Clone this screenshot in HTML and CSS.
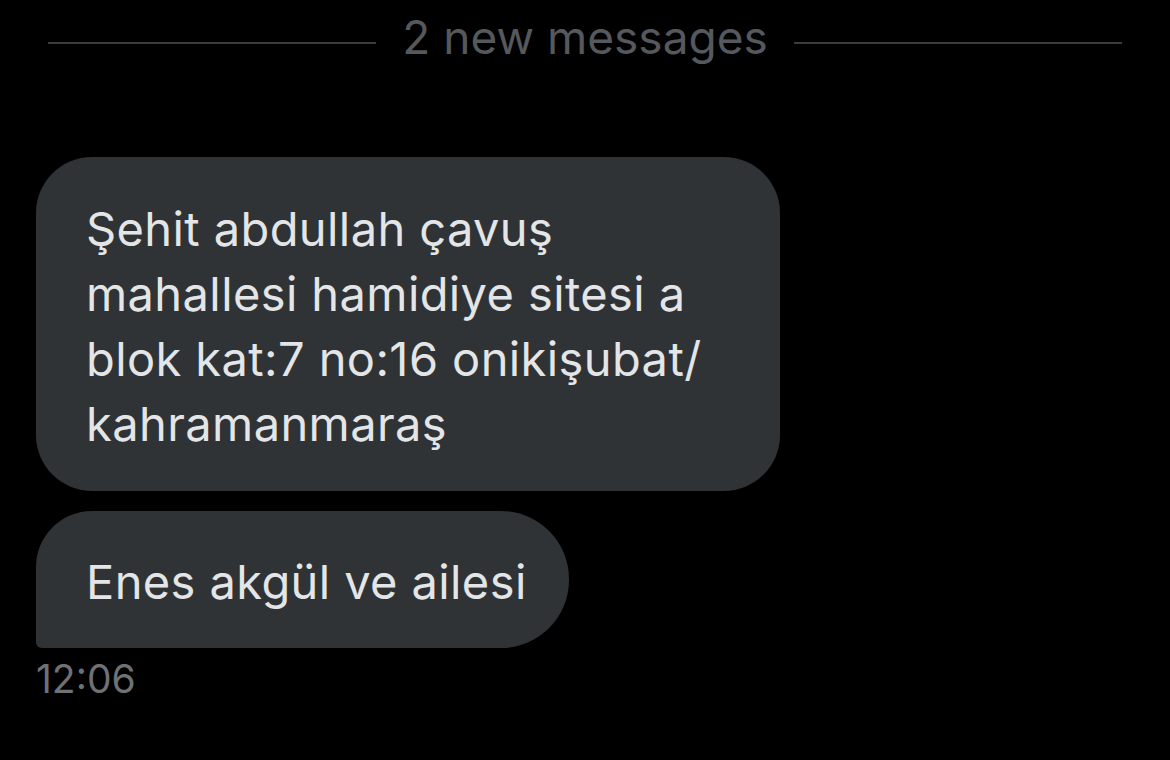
FILE: index.html
```html
<!DOCTYPE html>
<html lang="tr">
<head>
  <meta charset="UTF-8" />
  <meta name="viewport" content="width=device-width, initial-scale=1.0"/>
  <title>Mesajlar</title>
  <link rel="stylesheet" href="styles.css">
</head>
<body>

  <div class="divider">
    <span class="divider-line"></span>
    <span class="divider-text">2 new messages</span>
    <span class="divider-line"></span>
  </div>

  <div class="thread">
    <div class="bubble bubble-first">
      Şehit abdullah çavuş mahallesi hamidiye sitesi a blok kat:7 no:16 onikişubat/ kahramanmaraş
    </div>
    <div class="bubble bubble-last">
      Enes akgül ve ailesi
    </div>
    <div class="time">12:06</div>
  </div>

</body>
</html>
```

FILE: styles.css
```css
body {
  margin: 0;
  background-color: #000000;
  color: #e3e5e6;
  font-family: Inter, "Noto Sans", sans-serif;
}
.divider {
  display: flex;
  align-items: center;
  gap: 26px;
  padding: 13px 48px 0 48px;
  height: 60px;
}
.divider-line {
  flex: 1;
  height: 2px;
  background-color: #3a3c3f;
}
.divider-text {
  color: #55585c;
  font-size: 46px;
  line-height: 60px;
  margin-top: -12px;
}
.thread {
  padding: 84px 36px 0 36px;
  display: flex;
  flex-direction: column;
  align-items: flex-start;
}
.bubble {
  background-color: #2f3336;
  font-size: 47px;
  line-height: 65px;
  letter-spacing: 0.4px;
  padding: 39px 50px 35px 50px;
}
.bubble-first {
  width: 644px;
  border-radius: 56px;
}
.bubble-last {
  margin-top: 20px;
  padding: 38px 42px 34px 50px;
  border-radius: 56px 68px 68px 6px;
}
.time {
  color: #6e7175;
  font-size: 39px;
  line-height: 60px;
  margin-top: 1px;
}
```
